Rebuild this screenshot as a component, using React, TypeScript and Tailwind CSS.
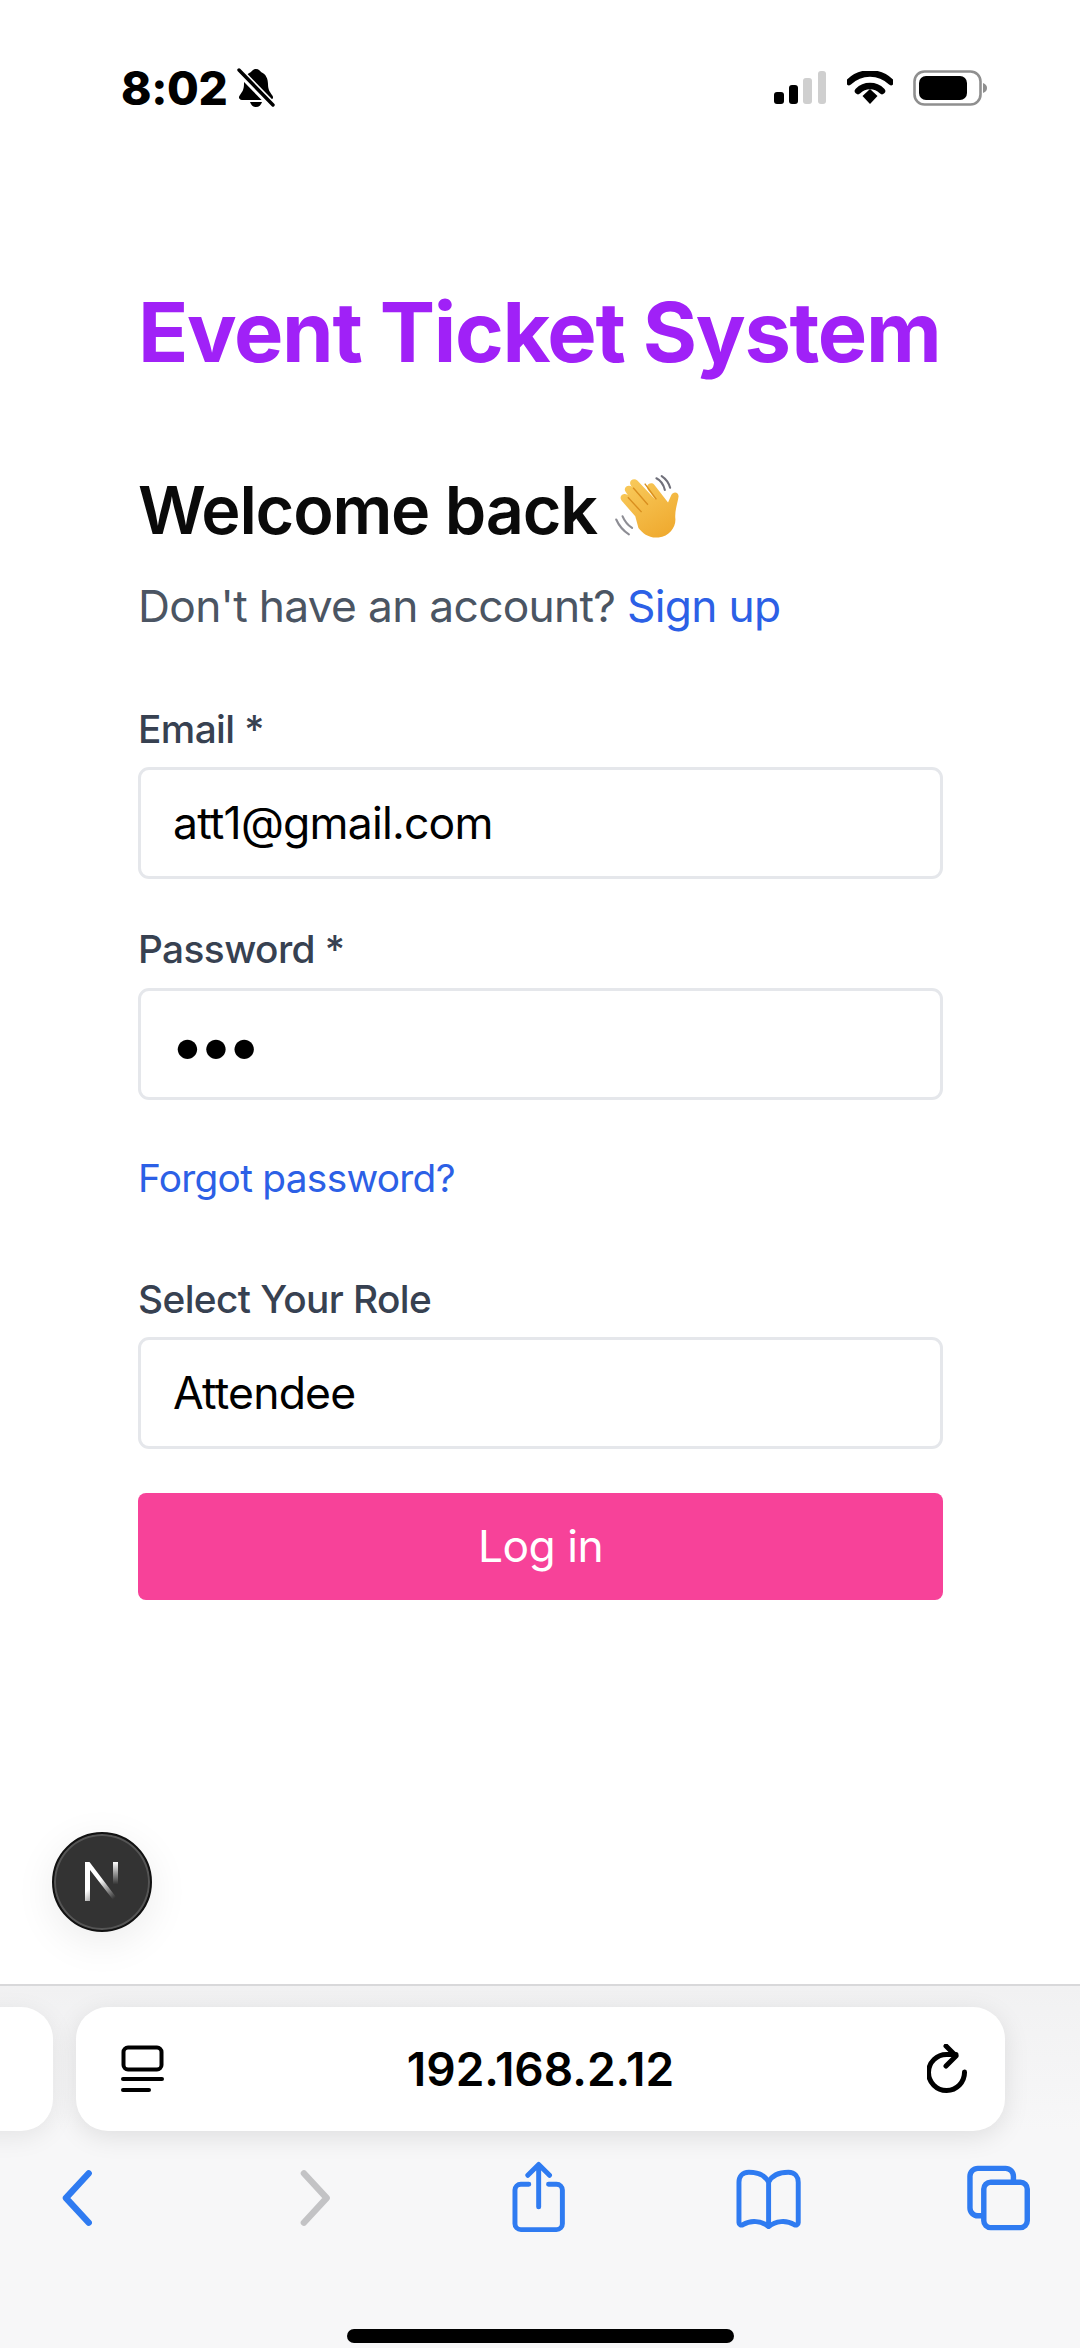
import React from "react";

const inputBase = "block w-full h-[112px] rounded-[11px] border-[3px] border-[#e5e7eb] bg-white text-black outline-none [font-family:Inter,sans-serif]";
const labelCls = "block text-[38.8px] leading-[56px] tracking-[-0.6px] font-medium text-[#374151]";

function Hand() {
  return (
    <svg width="74" height="74" viewBox="0 0 70 70" className="ml-[15px] shrink-0">
      <defs>
        <linearGradient id="h" x1="0.2" y1="0" x2="0.8" y2="1">
          <stop offset="0" stopColor="#f8c95a" />
          <stop offset="1" stopColor="#efa92e" />
        </linearGradient>
      </defs>
      <path d="M4 44q4 9 12 14M10 41q3 7 9 11" stroke="#8d8d94" strokeWidth="2" fill="none" strokeLinecap="round" />
      <path d="M42 5q6 3 8 11M47 3q6 4 8 11" stroke="#70707a" strokeWidth="2" fill="none" strokeLinecap="round" />
      <path d="M21 42L8 27c-3-4 2-8 6-5l-2-3c-3-4 2-8 6-5l-1-1c-3-4 2-8 6-5l14 15 3 3-7-9c-3-5 3-8 6-5l13 17 3-7c2-4 7-3 7 1 -1 7-4 14-3 22 0 8-6 16-16 17-9 1-15-4-19-9z" fill="url(#h)" transform="translate(1 -1)" />
      <path d="M15 23l13 14M20 14l14 16M31 10l11 15" stroke="#d98f1f" strokeWidth="1.3" fill="none" />
    </svg>
  );
}

function Bell() {
  return (
    <svg width="38" height="40" viewBox="0 0 38 40" className="ml-[10px]">
      <path d="M19 1c3 0 4 2 5 3 5 2 7 7 7 12 0 6 2 8 4 11 2 2 1 5-2 5H5c-3 0-4-3-2-5 2-3 4-5 4-11 0-5 2-10 7-12 1-1 2-3 5-3z" fill="#000" />
      <path d="M13 34h12c-1 3-3 5-6 5s-5-2-6-5z" fill="#000" />
      <path d="M1 2l35 36" stroke="#fff" strokeWidth="8" />
      <path d="M2 2l34 35" stroke="#000" strokeWidth="3.4" strokeLinecap="round" />
    </svg>
  );
}

function StatusIcons() {
  return (
    <div className="flex items-center">
      <svg width="52" height="34" viewBox="0 0 52 34">
        <rect x="0" y="21" width="10" height="12" rx="3" fill="#000" />
        <rect x="15" y="14" width="9" height="19" rx="3" fill="#000" />
        <rect x="29" y="7" width="9" height="26" rx="3" fill="#cfcfcf" />
        <rect x="44" y="0" width="8" height="33" rx="3" fill="#cfcfcf" />
      </svg>
      <svg width="46" height="34" viewBox="0 0 46 34" className="ml-[21px]">
        <path d="M2 11a30 30 0 0 1 42 0" stroke="#000" strokeWidth="6.5" fill="none" strokeLinecap="round" />
        <path d="M11 20a17 17 0 0 1 24 0" stroke="#000" strokeWidth="6.5" fill="none" strokeLinecap="round" />
        <path d="M15.5 26L23 19l7.5 7L23 34z" fill="#000" transform="translate(0 -1)" />
      </svg>
      <svg width="75" height="36" viewBox="0 0 75 36" className="ml-[20px]">
        <rect x="1.5" y="1.5" width="66" height="33" rx="10" fill="none" stroke="#8f8f8f" strokeWidth="2.6" />
        <rect x="6" y="6" width="48" height="24" rx="7" fill="#000" />
        <path d="M70 13c3 1 4 3 4 5s-1 4-4 5z" fill="#8f8f8f" />
      </svg>
    </div>
  );
}

const blue = "#2f7bf1";

function Toolbar() {
  return (
    <div className="flex items-start justify-between h-[72px] pl-[62px] pr-[50px] mt-[30px]">
      <svg width="32" height="58" viewBox="0 0 32 58" className="mt-[8px]">
        <path d="M27 4L4 29l23 25" stroke={blue} strokeWidth="6.5" fill="none" strokeLinecap="round" strokeLinejoin="round" />
      </svg>
      <svg width="32" height="58" viewBox="0 0 32 58" className="mt-[8px] ml-[205px]">
        <path d="M5 4l23 25L5 54" stroke="#c3c3c5" strokeWidth="6.5" fill="none" strokeLinecap="round" strokeLinejoin="round" />
      </svg>
      <svg width="54" height="72" viewBox="0 0 54 72" className="ml-[182px]">
        <path d="M17 23H9a6 6 0 0 0-6 6v34a6 6 0 0 0 6 6h36a6 6 0 0 0 6-6V29a6 6 0 0 0-6-6h-8" stroke={blue} strokeWidth="5" fill="none" strokeLinecap="round" />
        <path d="M27 46V4M16 14L27 3l11 11" stroke={blue} strokeWidth="5" fill="none" strokeLinecap="round" strokeLinejoin="round" />
      </svg>
      <svg width="66" height="60" viewBox="0 0 66 60" className="mt-[8px] ml-[170px]">
        <path d="M33 13C29 5 20 3 13 3 6 3 3 8 3 13v41c0 2 2 3 4 2 8-5 19-4 26 2 7-6 18-7 26-2 2 1 4 0 4-2V13c0-5-3-10-10-10-7 0-16 2-20 10zM33 13v45" stroke={blue} strokeWidth="5" fill="none" strokeLinejoin="round" />
      </svg>
      <svg width="64" height="66" viewBox="0 0 64 66" className="mt-[4px] ml-[166px]">
        <path d="M47 16v-5a8 8 0 0 0-8-8H11a8 8 0 0 0-8 8v32a8 8 0 0 0 8 8h5" stroke={blue} strokeWidth="5.5" fill="none" />
        <rect x="17" y="17" width="44" height="46" rx="7" stroke={blue} strokeWidth="5.5" fill="none" />
      </svg>
    </div>
  );
}

export default function App() {
  return (
    <div className="relative flex flex-col w-[1080px] h-[2348px] overflow-hidden bg-white [font-family:Inter,sans-serif]">
      <header className="flex items-center justify-between h-[70px] mt-[53px] pl-[121px] pr-[92px] shrink-0">
        <div className="flex items-center">
          <span className="text-[46px] leading-[46px] font-extrabold tracking-[-0.4px] text-black">8:02</span>
          <Bell />
        </div>
        <StatusIcons />
      </header>

      <main className="flex-1 pl-[138px] pr-[137px] pt-[164px]">
        <h1 className="text-[83px] leading-[90px] font-bold tracking-[-1.35px] text-[#a021f7] whitespace-nowrap">Event Ticket System</h1>
        <div className="flex items-center h-[80px] mt-[93px]">
          <h2 className="text-[66.5px] leading-[80px] font-semibold tracking-[-1.2px] text-[#0a0a0a]">Welcome back</h2>
          <Hand />
        </div>
        <p className="text-[44.3px] leading-[66px] tracking-[-0.7px] mt-[23px] text-[#4b5563]">
          Don't have an account? <a className="text-[#2c60e6]">Sign up</a>
        </p>

        <label className={`${labelCls} mt-[62px]`}>Email *</label>
        <input className={`${inputBase} mt-[10px] px-[32px] text-[44.5px] tracking-[-0.8px]`} readOnly value="att1@gmail.com" />
        <label className={`${labelCls} mt-[42px]`}>Password *</label>
        <input className={`${inputBase} mt-[11px] pl-[29px] pr-[32px] text-[62px] tracking-[-6.5px]`} readOnly type="password" value="abc" />
        <a className="block text-[38.8px] leading-[56px] tracking-[-0.7px] mt-[50px] text-[#2c60e6]">Forgot password?</a>
        <label className={`${labelCls} mt-[65px]`}>Select Your Role</label>
        <input className={`${inputBase} mt-[10px] px-[32px] text-[44.5px] tracking-[-0.8px]`} readOnly value="Attendee" />
        <button className="block w-full h-[107px] mt-[44px] rounded-[8px] bg-[#f74299] text-white text-[44.3px] tracking-[-0.5px]">Log in</button>
      </main>

      <div className="absolute left-[52px] top-[1832px] w-[100px] h-[100px] rounded-full bg-[#333333] border-[2px] border-[#111] shadow-[0_10px_40px_rgba(0,0,0,0.08),inset_0_0_0_2px_#555] flex items-center justify-center">
        <svg width="36" height="42" viewBox="0 0 36 42">
          <defs>
            <linearGradient id="n1" x1="0" y1="0" x2="0.7" y2="1">
              <stop offset="0.5" stopColor="#fff" />
              <stop offset="1" stopColor="#fff" stopOpacity="0" />
            </linearGradient>
            <linearGradient id="n2" x1="0" y1="0" x2="0" y2="1">
              <stop offset="0" stopColor="#fff" />
              <stop offset="0.8" stopColor="#fff" stopOpacity="0" />
            </linearGradient>
          </defs>
          <path d="M1 1h4.500L35 40l-3.500 2L6 9v31H1z" fill="url(#n1)" />
          <rect x="29" y="1" width="5" height="28" fill="url(#n2)" />
        </svg>
      </div>

      <footer className="relative h-[364px] shrink-0 border-t-[2px] border-[#d8d8da] bg-[linear-gradient(#f1f1f2,#f7f7f8_40%)] overflow-hidden">
        <div className="flex mt-[21px] gap-[23px] -ml-[100px]">
          <div className="w-[153px] h-[124px] rounded-[32px] bg-white shadow-[0_6px_26px_rgba(0,0,0,0.08)]" />
          <div className="w-[929px] h-[124px] rounded-[32px] bg-white shadow-[0_6px_26px_rgba(0,0,0,0.1)] flex items-center justify-between pl-[45px] pr-[36px] shrink-0">
            <svg width="44" height="48" viewBox="0 0 44 48">
              <rect x="2.500" y="2.500" width="38" height="22" rx="4.500" fill="none" stroke="#000" strokeWidth="4" />
              <path d="M2 34h39" stroke="#000" strokeWidth="4" strokeLinecap="round" />
              <path d="M2 45h26" stroke="#000" strokeWidth="4" strokeLinecap="round" />
            </svg>
            <span className="text-[46px] font-semibold text-black mr-[11px]">192.168.2.12</span>
            <svg width="42" height="50" viewBox="0 0 42 50">
              <path d="M37.500 28A18 18 0 1 1 20 10.500h9" stroke="#000" strokeWidth="5" fill="none" strokeLinecap="round" />
              <path d="M19 2l10 10-10 10" stroke="#000" strokeWidth="5" fill="none" strokeLinecap="round" strokeLinejoin="round" />
            </svg>
          </div>
        </div>
        <Toolbar />
        <div className="absolute left-[347px] top-[343px] w-[387px] h-[14px] rounded-full bg-black" />
      </footer>
    </div>
  );
}
